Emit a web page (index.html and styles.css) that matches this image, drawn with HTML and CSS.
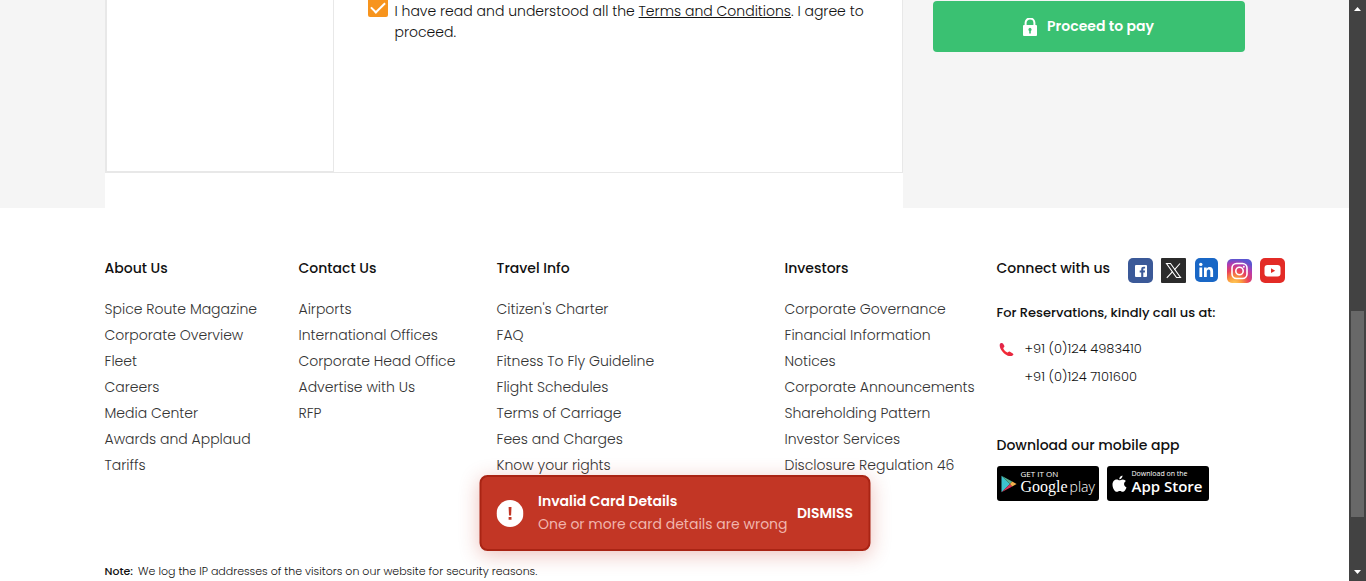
FILE: index.html
```html
<!DOCTYPE html>
<html lang="en">
<head>
<meta charset="utf-8">
<meta name="viewport" content="width=device-width, initial-scale=1">
<title>Payment</title>
<link rel="stylesheet" href="styles.css">
</head>
<body>
<div class="window">
  <div class="page">
    <main class="booking">
      <div class="container booking-row">
        <section class="payment">
          <div class="payment-panel">
            <div class="method-list"></div>
            <div class="terms">
              <input class="terms-check" type="checkbox" id="agree" checked>
              <label class="terms-label" for="agree">I have read and understood all the <a href="#terms">Terms and Conditions</a>. I agree to proceed.</label>
            </div>
          </div>
        </section>
        <aside class="summary">
          <button class="pay-button" type="button">
            <svg width="14" height="18" viewBox="0 0 14 18" aria-hidden="true"><path d="M2.600 8V4.800a4.400 4.400 0 0 1 8.800 0V8" fill="none" stroke="#fff" stroke-width="2"/><rect y="7" width="14" height="11" rx="1" fill="#fff"/><path d="M7 9.800a1.800 1.800 0 0 1 .8 3.300V15.400H6.200v-2.300A1.800 1.800 0 0 1 7 9.800z" fill="#3ac172"/></svg>
            <span>Proceed to pay</span>
          </button>
        </aside>
      </div>
    </main>

    <footer class="footer">
      <div class="footer-grid">
        <nav class="links" aria-label="About Us">
          <h2>About Us</h2>
          <ul>
            <li><a href="#">Spice Route Magazine</a></li>
            <li><a href="#">Corporate Overview</a></li>
            <li><a href="#">Fleet</a></li>
            <li><a href="#">Careers</a></li>
            <li><a href="#">Media Center</a></li>
            <li><a href="#">Awards and Applaud</a></li>
            <li><a href="#">Tariffs</a></li>
          </ul>
        </nav>
        <nav class="links" aria-label="Contact Us">
          <h2>Contact Us</h2>
          <ul>
            <li><a href="#">Airports</a></li>
            <li><a href="#">International Offices</a></li>
            <li><a href="#">Corporate Head Office</a></li>
            <li><a href="#">Advertise with Us</a></li>
            <li><a href="#">RFP</a></li>
          </ul>
        </nav>
        <nav class="links" aria-label="Travel Info">
          <h2>Travel Info</h2>
          <ul>
            <li><a href="#">Citizen's Charter</a></li>
            <li><a href="#">FAQ</a></li>
            <li><a href="#">Fitness To Fly Guideline</a></li>
            <li><a href="#">Flight Schedules</a></li>
            <li><a href="#">Terms of Carriage</a></li>
            <li><a href="#">Fees and Charges</a></li>
            <li><a href="#">Know your rights</a></li>
          </ul>
        </nav>
        <nav class="links" aria-label="Investors">
          <h2>Investors</h2>
          <ul>
            <li><a href="#">Corporate Governance</a></li>
            <li><a href="#">Financial Information</a></li>
            <li><a href="#">Notices</a></li>
            <li><a href="#">Corporate Announcements</a></li>
            <li><a href="#">Shareholding Pattern</a></li>
            <li><a href="#">Investor Services</a></li>
            <li><a href="#">Disclosure Regulation 46</a></li>
          </ul>
        </nav>
        <section class="connect">
          <div class="connect-head">
            <h2>Connect with us</h2>
            <div class="social">
              <a href="#" aria-label="Facebook"><svg width="25" height="25" viewBox="0 0 25 25"><rect width="25" height="25" rx="5" fill="#3b5998"/><rect x="7" y="7" width="12" height="12" rx="1" fill="#fff"/><path d="M13.200 19v-4.600h-1.500v-1.900h1.500v-1.300c0-1.700 1-2.500 2.500-2.500h1.400v1.900h-.9c-.7 0-.9.3-.9.9v1h1.800l-.3 1.900h-1.500V19z" fill="#3b5998"/></svg></a>
              <a href="#" aria-label="X"><svg width="25" height="25" viewBox="0 0 25 25"><rect width="25" height="25" rx="1" fill="#2b2b2b"/><path d="M5.500 5.500h4l10 14h-4z" fill="none" stroke="#fff" stroke-width="1.100"/><path d="M19 5.500l-5.600 6.300M11.600 13.600l-5.800 6.200" stroke="#fff" stroke-width="1.100"/></svg></a>
              <a href="#" aria-label="LinkedIn"><svg width="25" height="25" viewBox="0 0 25 25"><rect x="1" width="23" height="24" rx="5" fill="#1967c6"/><circle cx="6.800" cy="6.400" r="1.700" fill="#fff"/><path d="M5.400 9.400h2.800V19H5.400zM10 9.400h2.700v1.300c.6-1 1.600-1.600 2.900-1.600 2.700 0 3.500 1.700 3.500 4.400V19h-2.800v-5c0-1.400-.3-2.400-1.600-2.400-1.400 0-1.900 1-1.900 2.400v5H10z" fill="#fff"/></svg></a>
              <a href="#" aria-label="Instagram"><svg width="25" height="25" viewBox="0 0 25 25"><defs><radialGradient id="insta" cx=".3" cy="1.05" r="1.05"><stop offset="0" stop-color="#ffd15c"/><stop offset=".28" stop-color="#fb9a3c"/><stop offset=".55" stop-color="#e9415a"/><stop offset=".8" stop-color="#b53bb0"/><stop offset="1" stop-color="#5b55d0"/></radialGradient></defs><rect y="1" width="25" height="24" rx="5" fill="url(#insta)"/><rect x="5" y="5.500" width="15" height="15" rx="4.500" fill="none" stroke="#fff" stroke-width="1.600"/><circle cx="12.500" cy="13" r="3.700" fill="none" stroke="#fff" stroke-width="1.600"/><circle cx="16.800" cy="8.700" r="1" fill="#fff"/></svg></a>
              <a href="#" aria-label="YouTube"><svg width="25" height="25" viewBox="0 0 25 25"><rect width="25" height="25" rx="5" fill="#e32b26"/><rect x="4.500" y="7" width="16" height="11.500" rx="3" fill="#fff"/><path d="M11 10.200v4.900l4.200-2.400z" fill="#e32b26"/></svg></a>
            </div>
          </div>
          <h3>For Reservations, kindly call us at:</h3>
          <div class="phones">
            <svg width="15" height="15" viewBox="0 0 15 15" aria-hidden="true"><defs><linearGradient id="phone" x1="0" y1="0" x2="1" y2="1"><stop offset="0" stop-color="#d92455"/><stop offset=".5" stop-color="#f52b32"/><stop offset="1" stop-color="#e22644"/></linearGradient></defs><path d="M.8 2.200C1.400.8 3.200.6 4 1.600l1.300 2.200c.3.700.1 1.200-.6 1.700-.5.4-.5.9-.2 1.400.9 1.500 2 2.600 3.400 3.400.6.3 1 .2 1.400-.3.5-.6 1-.7 1.700-.3l2.800 1.700c.8.500.8 1.200.1 1.800-2 1.600-4.900 1-7.700-1C2.800 9.800.1 5.400.8 2.200z" fill="url(#phone)"/></svg>
            <div class="phone-list"><a href="tel:+911244983410">+91 (0)124 4983410</a><a href="tel:+911247101600">+91 (0)124 7101600</a></div>
          </div>
          <h2>Download our mobile app</h2>
          <div class="stores">
            <a class="store" href="#">
              <svg width="16" height="18" viewBox="0 0 16 18" aria-hidden="true"><path d="M.5.8L9 9 .5 17.200z" fill="#3cc3cf"/><path d="M.5.8L11.200 6.600 9 9z" fill="#55b08f"/><path d="M.5 17.200L9 9l2.200 2.400z" fill="#d9365b"/><path d="M11.200 6.600L15.600 9l-4.400 2.400L9 9z" fill="#f5b04c"/></svg>
              <span class="store-text play"><small>GET IT ON</small><b>Google <i>play</i></b></span>
            </a>
            <a class="store" href="#">
              <svg width="15" height="18" viewBox="0 0 15 18" aria-hidden="true"><path d="M10.500.5c.1 2-1.300 3.700-3.200 3.800C7.100 2.300 8.700.7 10.500.5zM7.500 5.300c.8 0 1.800-.9 3.300-.9 1.300.1 2.400.7 3.100 1.700-2.700 1.600-2.300 5.100.6 6.300-.7 2-2.100 4.400-3.700 4.400-1.200 0-1.600-.8-3-.8s-1.900.8-3 .8C2.700 16.800.5 13 .5 9.700c0-3.400 2.200-5.200 4.200-5.200 1.300 0 2.100.8 2.800.8z" fill="#fff"/></svg>
              <span class="store-text apple"><small>Download on the</small><b>App Store</b></span>
            </a>
          </div>
        </section>
      </div>
      <p class="note container"><b>Note:</b> We log the IP addresses of the visitors on our website for security reasons.</p>
    </footer>

    <div class="toast" role="alert">
      <svg width="27" height="27" viewBox="0 0 27 27" aria-hidden="true"><circle cx="13.500" cy="13.500" r="13.500" fill="#fff"/><path d="M12.100 7h2.900l-.4 8.500h-2.100zM12.100 17h2.900v2.700h-2.900z" fill="#c23625"/></svg>
      <div class="toast-text"><strong>Invalid Card Details</strong><span>One or more card details are wrong</span></div>
      <button class="dismiss" type="button">DISMISS</button>
    </div>
  </div>
  <div class="scrollbar" aria-hidden="true">
    <svg width="7" height="4" viewBox="0 0 7 4"><path d="M3.500 0L7 4H0z" fill="#fff"/></svg>
    <div class="track"><div class="thumb"></div></div>
    <svg width="7" height="4" viewBox="0 0 7 4"><path d="M0 0h7L3.500 4z" fill="#fff"/></svg>
  </div>
</div>
</body>
</html>
```
FILE: styles.css
```css
* { box-sizing: border-box; }

body {
  margin: 0;
  background: #fff;
  color: #111;
  font-family: Poppins, Inter, "Liberation Sans", sans-serif;
  font-size: 14px;
  line-height: 21px;
}

a { color: inherit; text-decoration: none; }
button { border: 0; font-family: inherit; cursor: pointer; }
svg { display: block; flex: none; }
h2, h3, p, ul { margin: 0; padding: 0; }
ul { list-style: none; }

.window { display: flex; min-height: 100vh; }
.page { position: relative; flex: 1; min-width: 0; }
.container { max-width: 1140px; margin: 0 auto; }

.booking { background: #f5f5f5; }
.booking-row { display: flex; }
.payment { width: 70%; padding-bottom: 35px; background: #fff; }
.payment-panel {
  display: flex;
  min-height: 173px;
  border: solid #e8e8e8;
  border-width: 0 1px 1px;
}
.method-list {
  width: 228px;
  flex: none;
  border: solid #e8e8e8;
  border-width: 0 1px 1px;
}
.terms { display: flex; gap: 7px; padding: 0 20px 0 34px; }
.terms-check {
  appearance: none;
  flex: none;
  width: 20px;
  height: 17px;
  margin: 0;
  border-radius: 0 0 2px 2px;
  background: #f7941d;
  display: grid;
  place-items: center;
}
.terms-check::before {
  content: "";
  width: 12px;
  height: 6px;
  margin-top: -5px;
  border: solid #fff;
  border-width: 0 0 2px 2px;
  transform: rotate(-45deg);
}
.terms-label { padding-top: 1px; font-weight: 300; }
.terms-label a { text-decoration: underline; }

.summary { width: 30%; padding: 1px 0 0 30px; }
.pay-button {
  display: flex;
  align-items: center;
  justify-content: center;
  gap: 10px;
  width: 100%;
  height: 51px;
  border-radius: 4px;
  background: #3ac172;
  color: #fff;
  font-size: 14px;
  font-weight: 600;
}

.footer { padding-top: 50px; }
.footer-grid {
  display: grid;
  grid-template-columns: 194px 198px 288px 212px 1fr;
  max-width: 1180px;
  margin-left: max(0px, calc((100% - 1140px) / 2));
}
h2 { font-size: 14px; font-weight: 500; line-height: 21px; }
h3 { font-size: 13px; font-weight: 500; line-height: 20px; }
.links h2 { margin-bottom: 17px; }
.links li { line-height: 26px; color: #333; font-weight: 300; white-space: nowrap; }

.connect-head { display: flex; gap: 18px; margin-bottom: 20px; }
.connect h2 { white-space: nowrap; }
.social { display: flex; gap: 8px; }
.phones { display: flex; gap: 11px; padding: 12px 0 44px 2px; font-size: 13px; font-weight: 300; line-height: 28px; }
.phones svg { margin-top: 7px; }
.phone-list { display: grid; }
.stores { display: flex; gap: 8px; margin-top: 10px; }
.store {
  display: flex;
  align-items: center;
  gap: 4px;
  width: 102px;
  height: 35px;
  padding: 0 4px;
  border-radius: 3px;
  background: #000;
  color: #fff;
  white-space: nowrap;
}
.store:last-child { gap: 5px; padding-left: 5px; }
.store-text { display: grid; padding-bottom: 3px; }
.store-text small { font-size: 7px; line-height: 9px; }
.play small { font-family: "Open Sans", sans-serif; font-size: 8px; font-weight: 500; }
.play b { font: 400 16px/17px "Liberation Serif", serif; }
.play i { margin-left: -2px; font: 300 14px/17px "Open Sans", sans-serif; }
.apple small { font-family: "Open Sans", sans-serif; font-size: 7px; }
.apple b { font: 600 15px/17px "Open Sans", sans-serif; }

.note { margin-top: 60px; font-size: 11px; font-weight: 300; line-height: 20px; }
.note b { margin-right: 2px; font-weight: 500; }

.toast {
  position: absolute;
  bottom: 30px;
  left: 50%;
  transform: translateX(-50%);
  display: flex;
  align-items: center;
  width: 391px;
  height: 76px;
  padding: 0 15px;
  border: 2px solid #a92414;
  border-radius: 8px;
  background: #c23625;
  box-shadow: 0 4px 20px rgba(194, 54, 37, .3);
  color: #fff;
  line-height: 23px;
}
.toast-text { display: grid; flex: 1; margin-left: 15px; white-space: nowrap; }
.toast-text strong { font-weight: 600; }
.toast-text span { color: #f0b5ad; font-weight: 400; }
.dismiss { padding: 0; background: none; color: #fff; font-size: 14px; font-weight: 600; }

.scrollbar {
  display: flex;
  flex-direction: column;
  align-items: center;
  width: 17px;
  padding: 7px 0;
  background: #424242;
}
.track { flex: 1; width: 13px; display: grid; grid-template-rows: 300fr 206fr 53fr; }
.thumb { grid-row: 2; background: #686868; }
```
